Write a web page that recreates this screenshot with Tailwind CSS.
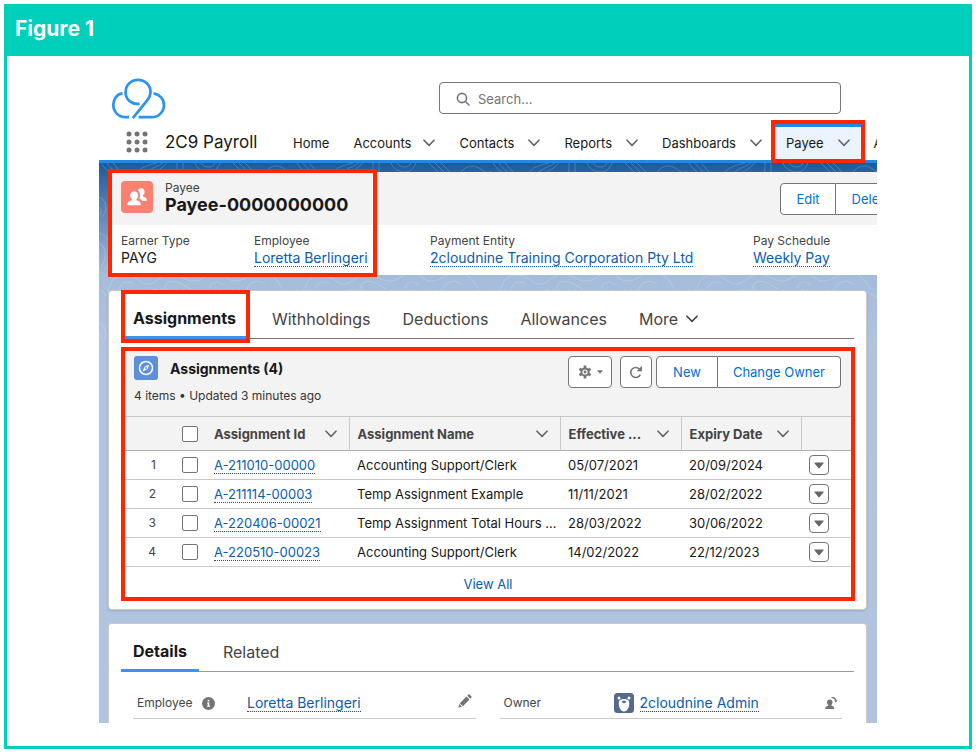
<!DOCTYPE html>
<html lang="en">
<head>
    <meta charset="UTF-8">
    <meta name="viewport" content="width=device-width, initial-scale=1.0">
    <script src="https://cdn.jsdelivr.net/npm/@tailwindcss/browser@4"></script>
    <title>2C9 Payroll - Payee</title>
</head>
<body class="bg-white font-[Inter,sans-serif] text-[13px] leading-4 text-[#181818]">
    <!-- Shared icons -->
    <svg class="hidden">
        <symbol id="chevron" viewBox="0 0 12 8">
            <path d="M1 1.2 6 6.4 11 1.2" fill="none" stroke="currentColor" stroke-width="1.6" stroke-linecap="round" stroke-linejoin="round"/>
        </symbol>
        <symbol id="triangle" viewBox="0 0 10 7">
            <path d="M.8.5h8.4a.5.5 0 0 1 .4.8L5.4 6.3a.5.5 0 0 1-.8 0L.4 1.3A.5.5 0 0 1 .8.5z" fill="currentColor"/>
        </symbol>
    </svg>

    <figure class="m-1 border-[3px] border-t-0 border-[#00cfbc]">
        <figcaption class="-mx-[3px] h-[52px] bg-[#00cfbc] px-[11px] py-3 text-[21px] leading-[26px] font-bold text-white">Figure 1</figcaption>

        <div class="mx-[92px] mt-[22px] mb-[23px] overflow-hidden">
            <!-- Global header -->
            <header>
                <div class="flex h-[42px] items-start justify-between pr-9 pl-3">
                    <svg class="h-[42px] w-[56px]" viewBox="0 0 56 42" fill="none" stroke="#2a94f0" stroke-width="2.7">
                        <path d="M11.500 15.400C5.600 16 2.300 21.500 2.300 26.800c0 7 5.300 12.400 12 12.400h3.800"/>
                        <path d="M42.600 15.400c6.200 1 10.400 5.800 10.400 11.600 0 6.700-5.300 12.200-12 12.200H27.600"/>
                        <path d="M28.600 25.600c-8 1.400-14-4.200-14-11.400C14.600 7.200 20 1.800 27 1.800s12.500 5.300 12.500 12.200c0 3.400-1.500 6-3.500 8.600L21.800 40.200"/>
                    </svg>
                    <label class="mt-1 flex h-8 w-[402px] items-center gap-2 rounded border border-[#747474] px-4 pt-0.5">
                        <svg class="size-[14px] text-[#747474]" viewBox="0 0 14 14" fill="none" stroke="currentColor" stroke-width="1.6" stroke-linecap="round">
                            <circle cx="6" cy="6" r="4.6"/>
                            <path d="m9.500 9.500 3.500 3.500"/>
                        </svg>
                        <span class="sr-only">Search</span>
                        <input type="search" placeholder="Search..." class="min-w-0 grow outline-none placeholder:text-[#747474]">
                    </label>
                </div>
                <nav class="flex h-[43px] items-end border-b-[3px] border-[#2389e9] pl-[27px]">
                    <button type="button" aria-label="App Launcher" class="mb-[7px] shrink-0 text-[#747474]">
                        <svg class="size-[22px]" viewBox="0 0 22 22" fill="currentColor">
                            <circle cx="3" cy="3" r="2.5"/><circle cx="11" cy="3" r="2.5"/><circle cx="19" cy="3" r="2.5"/>
                            <circle cx="3" cy="11" r="2.5"/><circle cx="11" cy="11" r="2.5"/><circle cx="19" cy="11" r="2.5"/>
                            <circle cx="3" cy="19" r="2.5"/><circle cx="11" cy="19" r="2.5"/><circle cx="19" cy="19" r="2.5"/>
                        </svg>
                    </button>
                    <span class="mb-[7px] ml-[17px] w-[116px] shrink-0 text-[17px] leading-[22px]">2C9 Payroll</span>
                    <a href="#" class="flex h-9 shrink-0 items-center px-3 pt-0.5">Home</a>
                    <a href="#" class="flex h-9 shrink-0 items-center gap-3 px-3 pt-0.5">Accounts <svg class="h-2 w-3 text-[#666]"><use href="#chevron"/></svg></a>
                    <a href="#" class="flex h-9 shrink-0 items-center gap-[14px] px-3 pt-0.5">Contacts <svg class="h-2 w-3 text-[#666]"><use href="#chevron"/></svg></a>
                    <a href="#" class="flex h-9 shrink-0 items-center gap-[14px] px-3 pt-0.5">Reports <svg class="h-2 w-3 text-[#666]"><use href="#chevron"/></svg></a>
                    <a href="#" class="flex h-9 shrink-0 items-center gap-[14px] px-3 pt-0.5">Dashboards <svg class="h-2 w-3 text-[#666]"><use href="#chevron"/></svg></a>
                    <a href="#" class="relative flex h-9 shrink-0 items-center gap-[14px] bg-[#ebf3fe] px-3 pt-0.5 shadow-[inset_0_3px_#2389e9]">
                        Payee <svg class="h-2 w-3 text-[#666]"><use href="#chevron"/></svg>
                        <span class="absolute -inset-x-[3px] -top-1 -bottom-[3px] border-4 border-[#ff2600]"></span>
                    </a>
                    <a href="#" class="flex h-9 shrink-0 items-center px-3 pt-0.5">A</a>
                </nav>
            </header>

            <main class="relative bg-[#b0c4df] bg-linear-to-b from-[#175b9c] from-0% via-[#a4bbdb] via-[110px] to-[#b0c4df] to-[180px] pt-[9px] pl-[9px]">
                <!-- Contour lines of the page background -->
                <svg class="absolute top-0 left-0 h-[190px] w-full opacity-25" fill="none" stroke="#fff" stroke-width=".8">
                    <pattern id="contours" width="196" height="126" patternUnits="userSpaceOnUse">
                        <path d="M2 0c3 6 9 8 12 14M8 0c3 5 8 8 11 12M14 0c3 4 7 7 10 11M38 9c6-6 12-7 20-9M46 10c7-5 11-6 18-10M54 11c5-4 9-6 14-11M78 0v5c0 5-3 8-6 12M84 0v9M96 0c2 6 8 9 14 9s9-4 11-9M102 0c2 3 5 4 8 4s5-2 6-4M134 0l12 12M140 0l12 12M146 0l12 12M166 9c5-6 12-8 18-4s8 6 12 3"/>
                        <path d="M0 34c8 3 9 14 3 20M0 44c3 2 3 6 0 8M0 70c14 4 16 24 6 36M0 80c8 4 8 16 2 24"/>
                        <path d="M10 126c2-12 12-16 22-13s10 9 18 8 12-10 22-10 14 8 24 7 12-9 22-8 10 9 20 8 14-10 26-8 14 8 20 16"/>
                        <path d="M20 126c2-7 8-8 14-6M66 126c-1-7 6-9 12-7s8 5 14 7M110 126c2-9 10-8 14-4M148 126c2-8 12-10 18-5"/>
                        <path d="M14 108c10-5 20 2 30-2s18-6 28-1 22 2 30-2 20 0 28 3 22-4 32-2" stroke-dasharray="5 3"/>
                    </pattern>
                    <rect width="100%" height="100%" fill="url(#contours)" stroke="none"/>
                </svg>

                <!-- Record header, runs past the right edge -->
                <section class="relative -mr-12 bg-white">
                    <div class="flex h-[53px] items-center bg-[#f3f3f3] px-[13px] pb-[3px]">
                        <span class="grid size-8 place-items-center rounded bg-[#fa8072]">
                            <svg class="size-[22px]" viewBox="0 0 22 22" fill="#fff">
                                <path d="M15.200 2.200c2 0 3.400 1.500 3.400 3.600 0 1.500-.7 2.700-1.500 3.500-.4.500-.2 1 .3 1.300 1.500.7 3.400 1.400 3.400 3.200v.4c0 .5-.4.800-.9.800h-3.700c-.6-1.100-1.800-1.800-3.100-2.400.6-1 1-2.100 1-3.500 0-2-.8-3.700-2.200-4.700.4-1.400 1.600-2.200 3.300-2.200z"/>
                                <path d="M8.200 5.200c2.400 0 4 1.700 4 4.100 0 1.500-.7 2.900-1.600 3.800-.5.600-.2 1.200.4 1.500 1.800.8 3.900 1.600 3.900 3.500v.3c0 .6-.4.900-.9.900H2.200c-.5 0-.9-.4-.9-.9v-.3c0-2 2.200-2.700 4-3.500.6-.3.900-.9.400-1.500-.9-.9-1.600-2.300-1.600-3.800 0-2.400 1.700-4.100 4.100-4.100z"/>
                            </svg>
                        </span>
                        <h1 class="ml-3">
                            <span class="block text-xs leading-4 text-[#444]">Payee</span>
                            <span class="block text-lg leading-[18px] font-bold">Payee-0000000000</span>
                        </h1>
                        <div class="mt-1 ml-auto flex h-8 text-[#0070d2]">
                            <button type="button" class="rounded-l border border-[#747474] bg-white px-[15px]">Edit</button>
                            <button type="button" class="rounded-r border border-l-0 border-[#747474] bg-white px-4 pr-5">Delete</button>
                        </div>
                    </div>
                    <dl class="flex px-[13px] pt-2 pb-2 text-sm whitespace-nowrap">
                        <div class="w-[133px] shrink-0">
                            <dt class="text-xs leading-4 text-[#444]">Earner Type</dt>
                            <dd class="leading-[18px]">PAYG</dd>
                        </div>
                        <div class="w-[176px] shrink-0">
                            <dt class="text-xs leading-4 text-[#444]">Employee</dt>
                            <dd class="leading-[18px]"><a href="#" class="border-b border-dotted border-[#0b5cab] text-[#0b5cab]">Loretta Berlingeri</a></dd>
                        </div>
                        <div class="w-[323px] shrink-0">
                            <dt class="text-xs leading-4 text-[#444]">Payment Entity</dt>
                            <dd class="leading-[18px]"><a href="#" class="border-b border-dotted border-[#0b5cab] text-[#0b5cab]">2cloudnine Training Corporation Pty Ltd</a></dd>
                        </div>
                        <div>
                            <dt class="text-xs leading-4 text-[#444]">Pay Schedule</dt>
                            <dd class="leading-[18px]"><a href="#" class="border-b border-dotted border-[#0b5cab] text-[#0b5cab]">Weekly Pay</a></dd>
                        </div>
                    </dl>
                    <span class="absolute -top-[3px] left-0 h-[108px] w-[269px] border-4 border-[#ff2600]"></span>
                </section>

                <!-- Related records -->
                <section class="relative mt-[15px] mr-[10px] rounded border border-[#c9c9c9] bg-white px-3 pb-2 shadow-sm">
                    <div class="relative z-10 flex h-12 border-b border-[#747474] text-base leading-6 text-[#444]">
                        <button type="button" class="relative -mb-px h-12 border-b-[3px] border-[#3d90f8] pt-2 pr-[14px] pl-3 font-bold text-[#181818]">
                            Assignments
                            <span class="absolute inset-x-0 -top-px -bottom-[7px] border-4 border-[#ff2600]"></span>
                        </button>
                        <button type="button" class="ml-[10px] px-3 pt-2">Withholdings</button>
                        <button type="button" class="ml-2 px-3 pt-2">Deductions</button>
                        <button type="button" class="ml-2 px-3 pt-2">Allowances</button>
                        <button type="button" class="ml-2 flex items-center gap-2 px-3 pt-2">More <svg class="h-2 w-3"><use href="#chevron"/></svg></button>
                    </div>

                    <div class="-mr-px mt-2 border-4 border-[#ff2600]">
                        <div class="bg-[#f3f3f3] pt-[5px] pr-[10px] pl-[9px]">
                            <div class="flex items-start">
                                <svg class="size-6 shrink-0" viewBox="0 0 24 24">
                                    <rect width="24" height="24" rx="3" fill="#5d8fdb"/>
                                    <circle cx="12" cy="12" r="6.5" fill="none" stroke="#fff" stroke-width="1.5"/>
                                    <path d="m15.400 8.600-1.800 4.500-5 2.300 1.900-4.600z" fill="#fff"/>
                                    <circle cx="12" cy="12" r="1" fill="#5d8fdb"/>
                                </svg>
                                <h2 class="ml-3 text-sm leading-[26px] font-bold">Assignments (4)</h2>
                                <div class="ml-auto flex h-8 text-[#0070d2]">
                                    <button type="button" aria-label="List settings" class="flex w-11 items-center justify-center gap-[5px] rounded border border-[#747474] bg-white text-[#747474]">
                                        <svg class="size-[14px]" viewBox="0 0 14 14" fill="none" stroke="currentColor">
                                            <circle cx="7" cy="7" r="3.600" stroke-width="2"/>
                                            <path d="M7 .5v2.500M7 11v2.500M1.400 3.800l2.100 1.200M10.500 9l2.100 1.200M1.400 10.200 3.500 9M10.500 5l2.100-1.200" stroke-width="2.600"/>
                                            <circle cx="7" cy="7" r="1.400" fill="currentColor" stroke="none"/>
                                        </svg>
                                        <svg class="h-1 w-[6px]"><use href="#triangle"/></svg>
                                    </button>
                                    <button type="button" aria-label="Refresh" class="mr-1 ml-2 grid w-8 place-items-center rounded border border-[#747474] bg-white text-[#747474]">
                                        <svg class="size-[14px]" viewBox="0 0 14 14" fill="none">
                                            <path d="M10.800 4.600A5 5 0 1 0 11.300 9.600" stroke="currentColor" stroke-width="1.6"/>
                                            <path d="M13 .8v5.400H7.600z" fill="currentColor"/>
                                        </svg>
                                    </button>
                                    <button type="button" class="rounded-l border border-[#747474] bg-white px-4">New</button>
                                    <button type="button" class="rounded-r border border-l-0 border-[#747474] bg-white px-[15px]">Change Owner</button>
                                </div>
                            </div>
                            <p class="pb-3 text-xs leading-4 text-[#333]">4 items • Updated 3 minutes ago</p>
                        </div>
                        <table class="w-full table-fixed border-collapse text-left">
                            <colgroup>
                                <col class="w-[45px]"><col class="w-9"><col class="w-[143px]"><col><col class="w-[121px]"><col class="w-[120px]"><col class="w-[50px]">
                            </colgroup>
                            <thead>
                                <tr class="h-[34px] border-y border-[#c9c9c9] border-b-[#aeaeae] bg-[#f3f3f3] text-[#444]">
                                    <th><span class="sr-only">Row</span></th>
                                    <th class="pl-3"><input type="checkbox" aria-label="Select all" class="block size-4 appearance-none rounded-xs border border-[#747474] bg-white"></th>
                                    <th class="border-r border-[#c9c9c9] px-2"><span class="flex items-center justify-between pr-1">Assignment Id <svg class="h-2 w-3 text-[#666]"><use href="#chevron"/></svg></span></th>
                                    <th class="border-r border-[#c9c9c9] px-2"><span class="flex items-center justify-between pr-1">Assignment Name <svg class="h-2 w-3 text-[#666]"><use href="#chevron"/></svg></span></th>
                                    <th class="border-r border-[#c9c9c9] px-2"><span class="flex items-center justify-between pr-1">Effective ... <svg class="h-2 w-3 text-[#666]"><use href="#chevron"/></svg></span></th>
                                    <th class="border-r border-[#c9c9c9] px-2"><span class="flex items-center justify-between pr-1">Expiry Date <svg class="h-2 w-3 text-[#666]"><use href="#chevron"/></svg></span></th>
                                    <th><span class="sr-only">Actions</span></th>
                                </tr>
                            </thead>
                            <tbody class="whitespace-nowrap">
                                <tr class="h-[29px] border-b border-[#c9c9c9]">
                                    <td class="pr-[14px] text-right text-xs text-[#444]">1</td>
                                    <td class="pl-3"><input type="checkbox" aria-label="Select item 1" class="block size-4 appearance-none rounded-xs border border-[#747474]"></td>
                                    <td class="px-2"><a href="#" class="border-b border-dotted border-[#0b5cab] text-[#0b5cab]">A-211010-00000</a></td>
                                    <td class="pl-2">Accounting Support/Clerk</td>
                                    <td class="px-2">05/07/2021</td>
                                    <td class="px-2">20/09/2024</td>
                                    <td class="pl-2"><button type="button" aria-label="Show actions" class="grid size-5 place-items-center rounded border border-[#747474] text-[#666]"><svg class="h-[7px] w-[10px]"><use href="#triangle"/></svg></button></td>
                                </tr>
                                <tr class="h-[29px] border-b border-[#c9c9c9]">
                                    <td class="pr-[14px] text-right text-xs text-[#444]">2</td>
                                    <td class="pl-3"><input type="checkbox" aria-label="Select item 2" class="block size-4 appearance-none rounded-xs border border-[#747474]"></td>
                                    <td class="px-2"><a href="#" class="border-b border-dotted border-[#0b5cab] text-[#0b5cab]">A-211114-00003</a></td>
                                    <td class="pl-2">Temp Assignment Example</td>
                                    <td class="px-2">11/11/2021</td>
                                    <td class="px-2">28/02/2022</td>
                                    <td class="pl-2"><button type="button" aria-label="Show actions" class="grid size-5 place-items-center rounded border border-[#747474] text-[#666]"><svg class="h-[7px] w-[10px]"><use href="#triangle"/></svg></button></td>
                                </tr>
                                <tr class="h-[29px] border-b border-[#c9c9c9]">
                                    <td class="pr-[14px] text-right text-xs text-[#444]">3</td>
                                    <td class="pl-3"><input type="checkbox" aria-label="Select item 3" class="block size-4 appearance-none rounded-xs border border-[#747474]"></td>
                                    <td class="px-2"><a href="#" class="border-b border-dotted border-[#0b5cab] text-[#0b5cab]">A-220406-00021</a></td>
                                    <td class="pl-2">Temp Assignment Total Hours ...</td>
                                    <td class="px-2">28/03/2022</td>
                                    <td class="px-2">30/06/2022</td>
                                    <td class="pl-2"><button type="button" aria-label="Show actions" class="grid size-5 place-items-center rounded border border-[#747474] text-[#666]"><svg class="h-[7px] w-[10px]"><use href="#triangle"/></svg></button></td>
                                </tr>
                                <tr class="h-[29px] border-b border-[#c9c9c9]">
                                    <td class="pr-[14px] text-right text-xs text-[#444]">4</td>
                                    <td class="pl-3"><input type="checkbox" aria-label="Select item 4" class="block size-4 appearance-none rounded-xs border border-[#747474]"></td>
                                    <td class="px-2"><a href="#" class="border-b border-dotted border-[#0b5cab] text-[#0b5cab]">A-220510-00023</a></td>
                                    <td class="pl-2">Accounting Support/Clerk</td>
                                    <td class="px-2">14/02/2022</td>
                                    <td class="px-2">22/12/2023</td>
                                    <td class="pl-2"><button type="button" aria-label="Show actions" class="grid size-5 place-items-center rounded border border-[#747474] text-[#666]"><svg class="h-[7px] w-[10px]"><use href="#triangle"/></svg></button></td>
                                </tr>
                            </tbody>
                        </table>
                        <a href="#" class="block pt-[9px] pb-[5px] text-center text-[#0b5cab]">View All</a>
                    </div>
                </section>

                <!-- Details -->
                <section class="relative mt-[13px] mr-[10px] rounded-t border border-b-0 border-[#c9c9c9] bg-white px-3 pb-1">
                    <div class="flex h-12 border-b border-[#999] text-base leading-6 text-[#444]">
                        <button type="button" class="-mb-px h-12 border-b-[3px] border-[#3d90f8] px-3 pt-2 font-bold text-[#181818]">Details</button>
                        <button type="button" class="ml-3 px-3 pt-2">Related</button>
                    </div>
                    <div class="grid grid-cols-2 gap-6 px-3 pt-4">
                        <div class="flex h-[31px] items-center border-b border-[#c9c9c9] px-1">
                            <span class="flex w-[110px] items-center gap-[10px] text-xs text-[#444]">Employee
                                <svg class="size-[13px]" viewBox="0 0 13 13">
                                    <circle cx="6.5" cy="6.5" r="6.5" fill="#747474"/>
                                    <path d="M5.700 2.800h1.600v1.600H5.700zM5 5.500h2.300v3.300H8v1H5v-1h.7V6.500H5z" fill="#fff"/>
                                </svg>
                            </span>
                            <a href="#" class="border-b border-dotted border-[#0b5cab] text-sm leading-4 text-[#0b5cab]">Loretta Berlingeri</a>
                            <button type="button" aria-label="Edit Employee" class="mb-1 ml-auto text-[#747474]">
                                <svg class="size-[14px]" viewBox="0 0 14 14" fill="currentColor">
                                    <path d="m1.800 9.200 6.700-6.700 3 3-6.700 6.700zM9.300 1.700l1-1c.5-.5 1-.5 1.500 0L13.300 2.200c.5.500.5 1 0 1.500l-1 1zM1.200 10.100l2.700 2.700-3 .7c-.3.100-.5-.1-.4-.4z"/>
                                </svg>
                            </button>
                        </div>
                        <div class="flex h-[31px] items-center border-b border-[#c9c9c9] px-1">
                            <span class="w-[110px] text-xs text-[#444]">Owner</span>
                            <svg class="mr-[6px] size-5" viewBox="0 0 20 20">
                                <rect width="20" height="20" rx="3.5" fill="#54698d"/>
                                <circle cx="5" cy="5" r="1.5" fill="#fff"/><circle cx="15" cy="5" r="1.5" fill="#fff"/>
                                <path d="M5.500 7.500C7.500 5.500 12.500 5.500 14.500 7.500c1 2 1 4.500.2 6.500-.7 2.500-2.700 4.500-4.700 4.500s-4-2-4.700-4.500c-.8-2-.8-4.500.2-6.500z" fill="#fff"/>
                                <path d="M8 8.300c.8-.6 3.200-.6 4 0 .3.900-.8 2-2 2s-2.300-1.100-2-2z" fill="#54698d"/>
                            </svg>
                            <a href="#" class="border-b border-dotted border-[#0b5cab] text-sm leading-4 text-[#0b5cab]">2cloudnine Admin</a>
                            <button type="button" aria-label="Change Owner" class="ml-auto text-[#747474]">
                                <svg class="size-[14px]" viewBox="0 0 14 14" fill="currentColor">
                                    <path d="M5.800 3.500c1.700 0 2.700 1.200 2.700 2.800 0 1-.4 1.900-1 2.500-.3.400-.2.700.3 1 1.200.5 2.400 1 2.400 2.300v.3c0 .4-.3.600-.6.600H1.900c-.3 0-.6-.3-.6-.6v-.3c0-1.300 1.300-1.800 2.500-2.300.4-.2.600-.6.300-1-.6-.6-1.100-1.500-1.100-2.500 0-1.600 1.100-2.800 2.800-2.800z"/>
                                    <path d="M7.500 1.700c2.300-.3 4 1 4.300 3" fill="none" stroke="currentColor" stroke-width="1.3"/>
                                    <path d="M10 4.300h3.600l-1.800 2.200z"/>
                                </svg>
                            </button>
                        </div>
                    </div>
                </section>
            </main>
        </div>
    </figure>
</body>
</html>
